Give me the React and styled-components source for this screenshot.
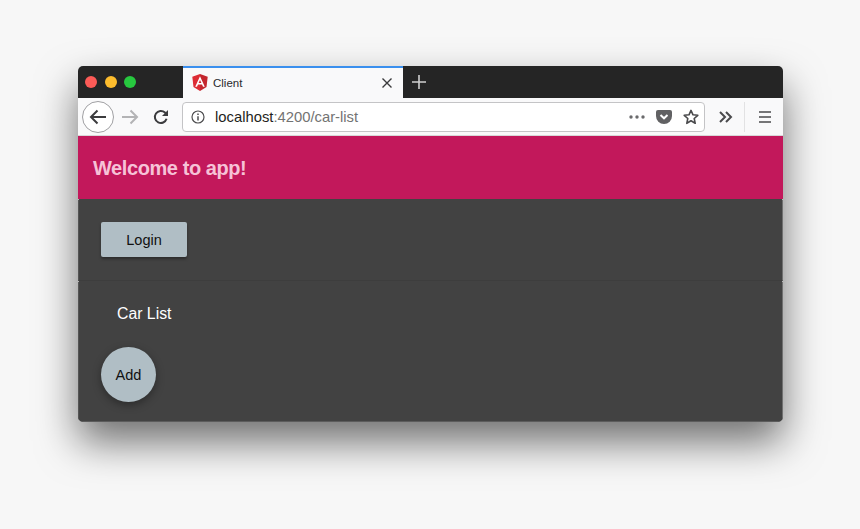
import React from "react";
import styled, { createGlobalStyle } from "styled-components";

const GlobalStyle = createGlobalStyle`
	html, body {
		margin: 0;
		padding: 0;
		height: 100%;
		background: #f7f7f7;
		font-family: "Liberation Sans", Arial, sans-serif;
		overflow: hidden;
	}
`;

const Page = styled.div`
	width: 860px;
	height: 529px;
	padding: 66px 0 0 78px;
	box-sizing: border-box;
`;

const BrowserWindow = styled.div`
	width: 705px;
	height: 356px;
	border-radius: 5px;
	overflow: hidden;
	display: flex;
	flex-direction: column;
	box-shadow: 0 20px 40px rgba(0, 0, 0, 0.55);
`;

const TabBar = styled.div`
	height: 32px;
	flex: none;
	background: #252525;
	display: flex;
	align-items: stretch;
`;

const Lights = styled.div`
	width: 105px;
	flex: none;
	padding-left: 7px;
	box-sizing: border-box;
	display: flex;
	align-items: center;
	gap: 7.5px;
`;

const Light = styled.span`
	width: 12px;
	height: 12px;
	border-radius: 50%;
	background: ${props => props.color};
`;

const Tab = styled.div`
	width: 220px;
	flex: none;
	box-sizing: border-box;
	background: #f9f9fa;
	border-top: 2px solid #3a8fee;
	display: flex;
	align-items: center;
	padding: 0 11px 1px 9px;
	color: #2a2a2e;
	font-size: 11.5px;
`;

const TabTitle = styled.span`
	margin-left: 5px;
	flex: 1;
`;

const NewTab = styled.div`
	width: 32px;
	display: flex;
	align-items: center;
	justify-content: center;
`;

const Toolbar = styled.div`
	height: 38px;
	flex: none;
	background: #f9f9fa;
	border-bottom: 1px solid #d8d8d8;
	box-sizing: border-box;
	display: flex;
	align-items: center;
	padding: 0 0 0 4px;
`;

const BackButton = styled.div`
	width: 32px;
	height: 32px;
	flex: none;
	border-radius: 50%;
	box-sizing: border-box;
	border: 1px solid #a0a0a3;
	background: #fff;
	display: flex;
	align-items: center;
	justify-content: center;
`;

const NavButton = styled.div`
	width: 31.5px;
	flex: none;
	display: flex;
	align-items: center;
	justify-content: center;
`;

const UrlBar = styled.div`
	width: 523px;
	height: 30px;
	margin-left: 5px;
	flex: none;
	box-sizing: border-box;
	background: #fff;
	border: 1px solid #c4c4c6;
	border-radius: 4px;
	display: flex;
	align-items: center;
	padding: 0 5px 0 8px;
`;

const UrlText = styled.div`
	flex: 1;
	margin-left: 10px;
	font-size: 14.8px;
	color: #737373;
`;

const Host = styled.span`
	color: #1f1f21;
`;

const UrlIcons = styled.div`
	display: flex;
	align-items: center;
	gap: 11px;
`;

const ToolbarEnd = styled.div`
	flex: 1;
	display: flex;
	align-items: center;
	height: 100%;
`;

const EndButton = styled.div`
	width: 39px;
	height: 100%;
	flex: none;
	display: flex;
	align-items: center;
	justify-content: center;
`;

const Separator = styled.div`
	width: 1px;
	height: 30px;
	flex: none;
	background: #e2e2e3;
`;

const AppHeader = styled.header`
	height: 63px;
	flex: none;
	box-sizing: border-box;
	background: #c2185b;
	color: #f6c2d7;
	display: flex;
	align-items: center;
	padding: 2px 0 0 15px;
	font-size: 20px;
	font-weight: 700;
	letter-spacing: -0.42px;
`;

const Panel = styled.section`
	position: relative;
	background: #424242;
	padding-left: 22px;
	box-sizing: border-box;
	border-left: 1px solid #555;
	border-right: 1px solid #707070;

	/* small light marks where the panels meet the window edge */
	&::before,
	&::after {
		content: "";
		position: absolute;
		top: 0;
		width: 1px;
		height: 1px;
		background: #b8b8b8;
	}
	&::before {
		left: -1px;
	}
	&::after {
		right: -1px;
	}
`;

const LoginPanel = styled(Panel)`
	height: 82px;
	padding-top: 23px;
	flex: none;
	border-bottom: 1px solid #3d3d3d;
`;

const ListPanel = styled(Panel)`
	flex: 1;
	border-bottom: 1px solid #5c5c5c;
`;

const LoginButton = styled.button`
	width: 86px;
	height: 35px;
	border: none;
	padding: 0;
	border-radius: 2px;
	background: #b0bec5;
	color: #111;
	font: 14.5px "Liberation Sans", Arial, sans-serif;
	box-shadow: 0 2px 3px rgba(0, 0, 0, 0.35);
`;

const ListTitle = styled.h2`
	margin: 0;
	padding: 23px 0 0 16px;
	height: 66px;
	box-sizing: border-box;
	color: #fff;
	font-size: 15.8px;
	font-weight: 400;
	line-height: 19px;
`;

const AddButton = styled.button`
	display: block;
	width: 55px;
	height: 55px;
	border: none;
	padding: 0;
	border-radius: 50%;
	background: #b0bec5;
	color: #111;
	font: 14.5px "Liberation Sans", Arial, sans-serif;
	box-shadow: 0 3px 8px rgba(0, 0, 0, 0.35);
`;

const AngularLogo = () => (
	<svg width="16" height="17" viewBox="0 0 16 17">
		<path d="M8 0 L0.3 2.8 L1.5 13 L8 17 Z" fill="#dd2c35" />
		<path d="M8 0 L15.7 2.8 L14.5 13 L8 17 Z" fill="#c4262e" />
		<path d="M8 2.2 L3.2 12.8 H5 L6 10.4 H10 L11 12.8 H12.8 Z M8 6 L9.4 9 H6.6 Z" fill="#fff" fillRule="evenodd" />
	</svg>
);

const Arrow = ({ color, flip }) => (
	<svg width="18" height="16" viewBox="0 0 18 16" fill="none" stroke={color} strokeWidth="2" style={flip ? { transform: "scaleX(-1)" } : undefined}>
		<path d="M8.5 1.5 L2 8 L8.5 14.5 M2 8 H17" />
	</svg>
);

const Reload = () => (
	<svg width="16" height="16" viewBox="0 0 16 16" fill="none">
		<path d="M13.6 9.8 A6 6 0 1 1 12 3.6 L14 5.6" stroke="#3c3c3e" strokeWidth="2" />
		<path d="M15 1 V7 H9 Z" fill="#3c3c3e" />
	</svg>
);

const InfoIcon = () => (
	<svg width="14" height="14" viewBox="0 0 14 14" fill="none" stroke="#4d4d4f">
		<circle cx="7" cy="7" r="6" strokeWidth="1.2" />
		<path d="M7 6.2 V10.4" strokeWidth="1.5" />
		<path d="M7 3.4 V5" strokeWidth="1.5" />
	</svg>
);

const Dots = () => (
	<svg width="16" height="4" viewBox="0 0 16 4" fill="#6a6a6c">
		<circle cx="2" cy="2" r="1.7" />
		<circle cx="8" cy="2" r="1.7" />
		<circle cx="14" cy="2" r="1.7" />
	</svg>
);

const Pocket = () => (
	<svg width="16" height="14" viewBox="0 0 16 14">
		<path d="M2 0 H14 A2 2 0 0 1 16 2 V6 A8 8 0 0 1 0 6 V2 A2 2 0 0 1 2 0 Z" fill="#616163" />
		<path d="M4.5 5 L8 8.3 L11.5 5" fill="none" stroke="#fff" strokeWidth="2" />
	</svg>
);

const Star = () => (
	<svg width="16" height="16" viewBox="0 0 16 16" fill="none" stroke="#4a4a4c" strokeWidth="1.6" strokeLinejoin="round">
		<path d="M8 1.4 L10 5.8 L14.8 6.3 L11.2 9.5 L12.2 14.3 L8 11.8 L3.8 14.3 L4.8 9.5 L1.2 6.3 L6 5.8 Z" />
	</svg>
);

const Chevrons = () => (
	<svg width="16" height="12" viewBox="0 0 16 12" fill="none" stroke="#4a4a4c" strokeWidth="2">
		<path d="M3 1 L8 6 L3 11 M9 1 L14 6 L9 11" />
	</svg>
);

const Hamburger = () => (
	<svg width="12" height="12" viewBox="0 0 12 12" stroke="#4a4a4c" strokeWidth="1.6">
		<path d="M0 1 H12 M0 6 H12 M0 11 H12" />
	</svg>
);

export default () => (
	<Page>
		<GlobalStyle />
		<BrowserWindow>
			<TabBar>
				<Lights>
					<Light color="#fc5b57" />
					<Light color="#fdbc2d" />
					<Light color="#27c83f" />
				</Lights>
				<Tab>
					<AngularLogo />
					<TabTitle>Client</TabTitle>
					<svg width="10" height="10" viewBox="0 0 10 10" stroke="#3a3a3c" strokeWidth="1.4">
						<path d="M0.5 0.5 L9.5 9.5 M9.5 0.5 L0.5 9.5" />
					</svg>
				</Tab>
				<NewTab>
					<svg width="14" height="14" viewBox="0 0 14 14" stroke="#d0d0d0" strokeWidth="1.6">
						<path d="M7 0 V14 M0 7 H14" />
					</svg>
				</NewTab>
			</TabBar>
			<Toolbar>
				<BackButton><Arrow color="#3c3c3e" /></BackButton>
				<NavButton><Arrow color="#b3b3b5" flip /></NavButton>
				<NavButton><Reload /></NavButton>
				<UrlBar>
					<InfoIcon />
					<UrlText><Host>localhost</Host>:4200/car-list</UrlText>
					<UrlIcons>
						<Dots />
						<Pocket />
						<Star />
					</UrlIcons>
				</UrlBar>
				<ToolbarEnd>
					<EndButton><Chevrons /></EndButton>
					<Separator />
					<EndButton><Hamburger /></EndButton>
				</ToolbarEnd>
			</Toolbar>
			<AppHeader>Welcome to app!</AppHeader>
			<LoginPanel>
				<LoginButton>Login</LoginButton>
			</LoginPanel>
			<ListPanel>
				<ListTitle>Car List</ListTitle>
				<AddButton>Add</AddButton>
			</ListPanel>
		</BrowserWindow>
	</Page>
);
